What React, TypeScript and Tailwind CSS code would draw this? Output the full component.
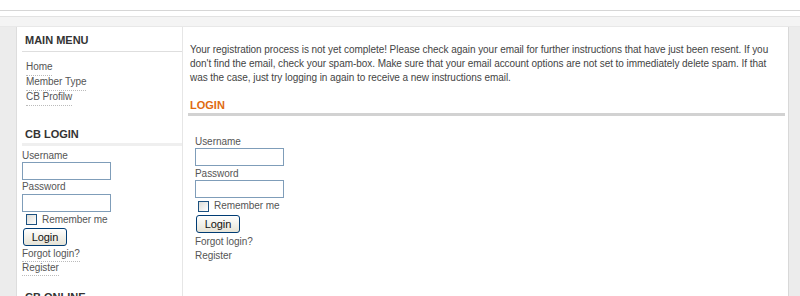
import React from 'react';

const menu = ['Home', 'Member Type', 'CB Profilw'];

const Check = () => (
  <span className="inline-block w-[11px] h-[11px] border border-[#1c5180] bg-gradient-to-br from-[#dcdcd7] to-white" />
);

const LoginButton = ({ className = '' }: { className?: string }) => (
  <button
    className={`h-[18px] w-[44px] rounded-[3px] border border-[#003c74] bg-gradient-to-b from-white to-[#e6e3d6] text-[11px] leading-[16px] text-[#111] ${className}`}
  >
    Login
  </button>
);

const TextBox = ({ className = '' }: { className?: string }) => (
  <input type="text" className={`block h-[18px] w-[89px] border border-[#7f9db9] bg-white ${className}`} />
);

export default function App() {
  return (
    <div className="w-[800px] h-[296px] overflow-hidden bg-white font-['Liberation_Sans',Arial,sans-serif] text-[10px] tracking-[-0.05px] text-[#444]">
      {/* top strip */}
      <div className="h-[11px] border-b border-[#d6d6d6]" />
      <div className="h-[5px]" />
      <div className="h-[10px] border-t border-[#e2e2e2] bg-[#f4f4f4]" />

      <div className="flex h-[270px] border-t border-[#e8e8e8]">
        <div className="w-[17px] border-r border-[#dddddd] bg-[#ececec]" />

        {/* left column */}
        <aside className="w-[166px] border-r border-[#e6e6e6] pl-[5px]">
          <h3 className="pt-[7px] pb-[4px] pl-[3px] border-b border-[#dedede] text-[11px] leading-[13px] font-bold tracking-normal text-[#333]">
            MAIN MENU
          </h3>
          <ul className="mt-[9px] pl-[4px] leading-[12px] text-[#555]">
            {menu.map(item => (
              <li key={item} className="h-[15px]">
                <span className="inline-block pb-[2px] border-b border-dotted border-[#bbbbbb]">{item}</span>
              </li>
            ))}
          </ul>

          <h3 className="mt-[22px] pb-[2px] pl-[3px] border-b-[3px] border-[#efefef] text-[11px] leading-[13px] font-bold tracking-normal text-[#333]">
            CB LOGIN
          </h3>
          <div className="leading-[12px] text-[#555]">
            <div className="mt-[4px]">Username</div>
            <TextBox />
            <div className="mt-[1px]">Password</div>
            <TextBox className="mt-[1px]" />
            <div className="mt-[2px] flex items-center gap-[5px] pl-[4px] h-[11px]">
              <Check />
              <span>Remember me</span>
            </div>
            <LoginButton className="mt-[3px] ml-[1px] block" />
            <div className="mt-[2px]">
              <span className="inline-block pb-[1px] border-b border-dotted border-[#bbbbbb]">Forgot login?</span>
            </div>
            <div>
              <span className="inline-block pb-[1px] border-b border-dotted border-[#bbbbbb]">Register</span>
            </div>
          </div>
          <h3 className="mt-[15px] pl-[3px] text-[11px] leading-[13px] font-bold tracking-normal text-[#333]">
            CB ONLINE
          </h3>
        </aside>

        {/* main content */}
        <main className="flex-1 pt-[16px]">
          <p className="pl-[7px] leading-[14px] whitespace-nowrap text-[#444]">
            Your registration process is not yet complete! Please check again your email for further instructions that have just been resent. If you
            <br />
            don't find the email, check your spam-box. Make sure that your email account options are not set to immediately delete spam. If that
            <br />
            was the case, just try logging in again to receive a new instructions email.
          </p>
          <h2 className="mt-[14px] ml-[5px] mr-[3px] pl-[2px] pb-[1px] border-b-[3px] border-[#d2d2d2] text-[11px] leading-[13px] font-bold tracking-normal text-[#e06a10]">
            LOGIN
          </h2>
          <div className="pl-[12px] leading-[12px] text-[#555]">
            <div className="mt-[20px]">Username</div>
            <TextBox />
            <div className="mt-[2px]">Password</div>
            <TextBox />
            <div className="mt-[2px] flex items-center gap-[5px] pl-[3px] h-[12px]">
              <Check />
              <span>Remember me</span>
            </div>
            <LoginButton className="mt-[3px] ml-[1px] block" />
            <div className="mt-[3px]">Forgot login?</div>
            <div className="mt-[2px]">Register</div>
          </div>
        </main>

        <div className="w-[12px] border-l border-[#d8d8d8] bg-[#ececec]" />
      </div>
    </div>
  );
}
